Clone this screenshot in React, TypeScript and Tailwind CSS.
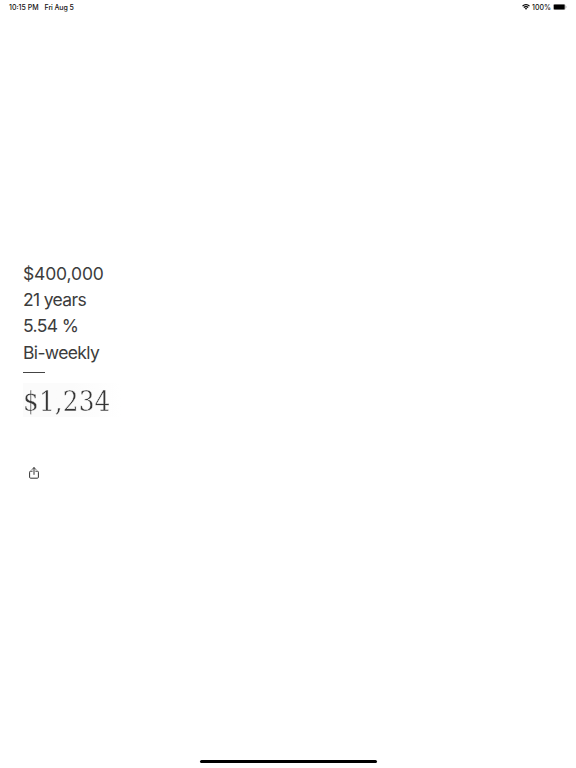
const terms = ["$400,000", "21 years", "5.54 %", "Bi-weekly"];
const spacing = ["tracking-[-0.15px]", "tracking-[-0.65px]", "tracking-[-0.6px]", "tracking-[-0.65px]"];

function StatusBar() {
  return (
    <header className="flex h-[14px] items-center justify-between pl-[9px] pr-[9px] text-[7px] font-medium leading-[14px] text-[#111]">
      <div className="flex gap-[6px] pt-px">
        <span>10:15 PM</span>
        <span className="tracking-[-0.1px]">Fri Aug 5</span>
      </div>
      <div className="flex items-center gap-[2px]">
        <svg width="8" height="6" viewBox="0 0 16 12" fill="none" stroke="#000" strokeWidth="2.4">
          <path d="M1 4.3a10 10 0 0 1 14 0M3.6 7a6.2 6.2 0 0 1 8.8 0" />
          <path d="M5.5 9.2a3.6 3.6 0 0 1 5 0L8 11.7z" fill="#000" stroke="none" />
        </svg>
        <span className="pt-px">100%</span>
        <svg width="14" height="6" viewBox="0 0 14 6">
          <rect x="0.25" y="0.25" width="12" height="5.5" rx="1.5" fill="#fff" stroke="#888" strokeWidth="0.5" />
          <rect x="0.8" y="0.6" width="10.9" height="4.8" rx="0.9" fill="#000" />
          <path d="M12.8 2v2q.8-.3.8-1t-.8-1" fill="#999" />
        </svg>
      </div>
    </header>
  );
}

export default function App() {
  return (
    <div className="flex h-[768px] w-[576px] flex-col overflow-hidden bg-white font-['Inter','Liberation_Sans',sans-serif]">
      <StatusBar />
      <main className="flex flex-1 flex-col items-start pl-[23px] pt-[247px] text-[#3c3c3c]">
        {terms.map((term, i) => (
          <p key={term} className={`h-[26.2px] whitespace-nowrap text-[17.5px] leading-[26.2px] ${spacing[i]}`}>
            {term}
          </p>
        ))}
        <div className="mt-[6px] h-px w-[22px] bg-[#444]" />
        <div className="mt-[10px] h-[34px] w-[98px] bg-linear-to-r from-[#fbfbfb] via-[#fbfbfb] to-white">
          <p className="whitespace-nowrap font-['DejaVu_Serif_Condensed','DejaVu_Serif',serif] text-[27.5px] leading-[36px] tracking-[0.15px] text-[#333] opacity-99 will-change-transform [-webkit-text-stroke:0.45px_#fbfbfb]">
            $1,234
          </p>
        </div>
        <button aria-label="Share" className="ml-[6px] mt-[50px]">
          <svg width="10" height="12" viewBox="0 0 10 12" fill="none" stroke="#333" strokeWidth="1" strokeLinecap="round" strokeLinejoin="round">
            <path d="M3.2 4.2H1.6Q.6 4.2.6 5.2v5q0 1 1 1h6.8q1 0 1-1v-5q0-1-1-1H6.8M5 7.4V.7M3.2 2.4 5 .6l1.8 1.8" />
          </svg>
        </button>
      </main>
      <footer className="flex h-[8px] justify-center">
        <div className="h-[3px] w-[177px] rounded-full bg-black" />
      </footer>
    </div>
  );
}
